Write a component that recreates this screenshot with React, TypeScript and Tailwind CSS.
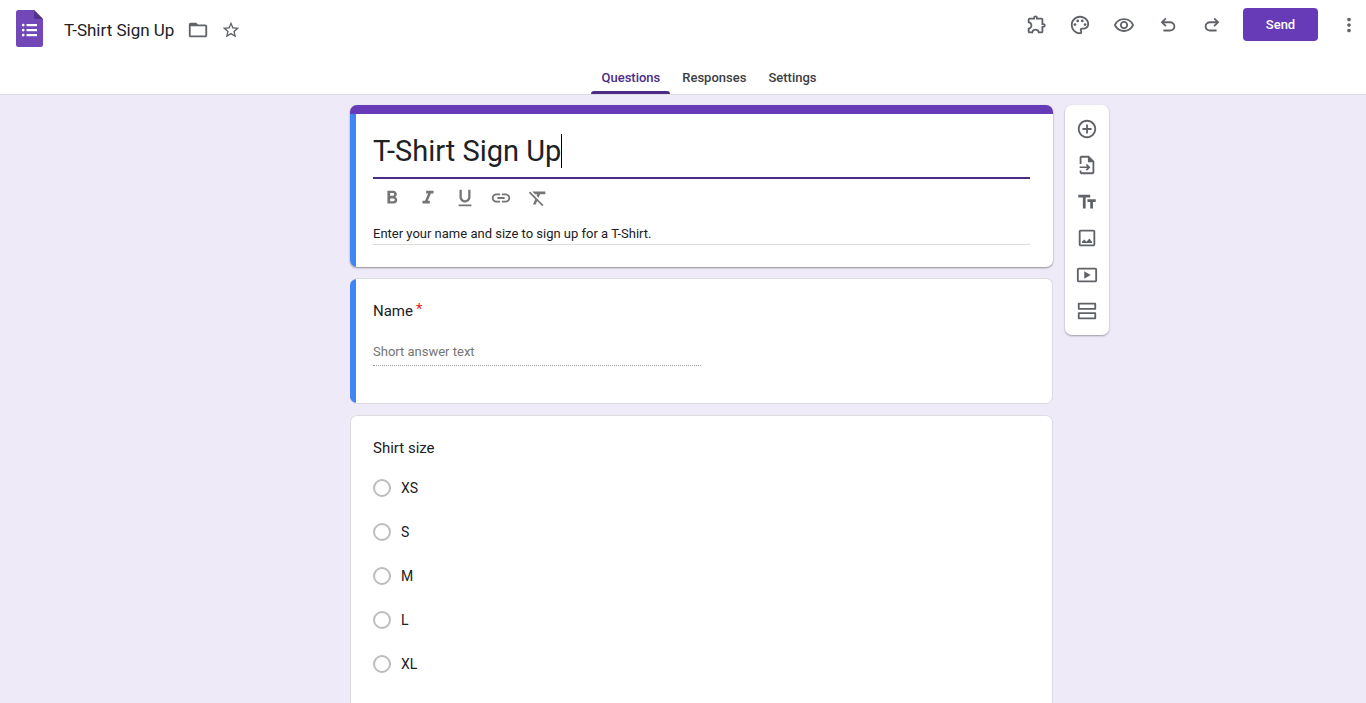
import { useState } from "react";
import type { ReactNode } from "react";
import {
  MdAddCircleOutline,
  MdFolderOpen,
  MdFormatBold,
  MdFormatClear,
  MdFormatItalic,
  MdFormatUnderlined,
  MdLink,
  MdMoreVert,
  MdOutlinePalette,
  MdOutlineRemoveRedEye,
  MdStarBorder,
  MdTextFields,
} from "react-icons/md";

const sizes = ["XS", "S", "M", "L", "XL"];
const tabs = ["Questions", "Responses", "Settings"];

function FormsLogo() {
  return (
    <svg viewBox="0 0 27 37" className="w-[27px] h-[37px]">
      <path d="M2.5 0H18l9 9v25.5a2.5 2.5 0 0 1-2.5 2.5h-22A2.5 2.5 0 0 1 0 34.5v-32A2.5 2.5 0 0 1 2.5 0z" fill="#7248b9" />
      <path d="M18 0l9 9h-7.5A1.5 1.5 0 0 1 18 7.5z" fill="#54318c" />
      <g fill="#fff">
        <rect x="10.5" y="14" width="10.5" height="2.2" />
        <rect x="10.5" y="19" width="10.5" height="2.2" />
        <rect x="10.5" y="24" width="10.5" height="2.2" />
        <circle cx="7.2" cy="15.1" r="1.4" />
        <circle cx="7.2" cy="20.1" r="1.4" />
        <circle cx="7.2" cy="25.1" r="1.4" />
      </g>
    </svg>
  );
}

function ExtensionIcon() {
  return (
    <svg viewBox="0 -960 960 960" fill="currentColor" className="size-[22px]">
      <path d="M352-120H200q-33 0-56.5-23.5T120-200v-152q48 0 84-30.5t36-77.5q0-47-36-77.5T120-568v-152q0-33 23.5-56.5T200-800h160q0-42 29-71t71-29q42 0 71 29t29 71h160q33 0 56.5 23.5T800-720v160q42 0 71 29t29 71q0 42-29 71t-71 29v160q0 33-23.5 56.5T720-120H568q0-50-31.5-85T460-240q-45 0-76.5 35T352-120Zm-152-80h85q24-66 77-93t98-27q45 0 98 27t77 93h85v-240h80q8 0 14-6t6-14q0-8-6-14t-14-6h-80v-240H480v-80q0-8-6-14t-14-6q-8 0-14 6t-6 14v80H200v88q54 20 87 67t33 105q0 57-33 104t-87 68v88Z" />
    </svg>
  );
}

function UndoIcon({ className = "" }: { className?: string }) {
  return (
    <svg viewBox="0 0 24 24" fill="currentColor" className={`size-[22px] ${className}`}>
      <path d="M7 19v-2h7.1q1.575 0 2.738-1T18 13.5 16.838 11 14.1 10H7.8l2.6 2.6L9 14 4 9l5-5 1.4 1.4L7.8 8h6.3q2.425 0 4.163 1.575T20 13.5t-1.737 3.925T14.1 19Z" />
    </svg>
  );
}

function ImportIcon() {
  return (
    <svg viewBox="0 0 24 24" fill="currentColor" className="size-[22px]">
      <path d="M14 2H6c-1.1 0-2 .9-2 2v7h2V4h7v5h5v11H6v-2H4v2c0 1.1.9 2 2 2h12c1.1 0 2-.9 2-2V8z" />
      <path d="M12 18.200l3.700-3.700-3.700-3.700-1.300 1.300 1.500 1.500H4v1.800h8.200l-1.500 1.500z" />
    </svg>
  );
}

function ImageIcon() {
  return (
    <svg viewBox="0 0 24 24" fill="currentColor" className="size-[22px]">
      <path d="M19 3H5c-1.100 0-2 .9-2 2v14c0 1.100.9 2 2 2h14c1.100 0 2-.9 2-2V5c0-1.100-.9-2-2-2zm0 16H5V5h14v14z" />
      <path d="M6.500 17.500v-1.500l2.500-2.500 2.500 2.500 3-3.500 3 3.500v1.500z" />
    </svg>
  );
}

function VideoIcon() {
  return (
    <svg viewBox="0 0 24 24" fill="currentColor" className="size-[22px]">
      <path d="M21 4H3c-1.100 0-2 .9-2 2v12c0 1.100.9 2 2 2h18c1.100 0 2-.9 2-2V6c0-1.100-.9-2-2-2zm0 14H3V6h18v12z" />
      <path d="M9 8v8l7-4z" />
    </svg>
  );
}

function SectionIcon() {
  return (
    <svg viewBox="0 0 24 24" fill="none" stroke="currentColor" strokeWidth="2" strokeLinejoin="round" className="size-[22px]">
      <rect x="3" y="4" width="18" height="5.600" />
      <rect x="3" y="14.400" width="18" height="5.600" />
    </svg>
  );
}

function IconButton({ label, className, children }: { label: string; className: string; children: ReactNode }) {
  return (
    <button type="button" aria-label={label} className={`flex items-center justify-center cursor-pointer ${className}`}>
      {children}
    </button>
  );
}

function Header() {
  const [active, setActive] = useState("Questions");

  return (
    <header className="bg-white border-b border-[#dadce0]">
      <div className="flex items-start justify-between pl-4 pr-[6px] pt-2">
        <div className="flex items-center pt-[2px]">
          <a href="#" aria-label="Forms home">
            <FormsLogo />
          </a>
          <div className="flex items-center ml-[21px] pt-[3px]">
            <h1 className="text-[17px] leading-6">T-Shirt Sign Up</h1>
            <IconButton label="Move to folder" className="ml-[13px] size-[22px] text-[#5f6368]">
              <MdFolderOpen size={22} />
            </IconButton>
            <IconButton label="Star" className="ml-[11px] size-[22px] text-[#5f6368]">
              <MdStarBorder size={20} />
            </IconButton>
          </div>
        </div>

        <div className="flex items-center text-[#5f6368]">
          <IconButton label="Add-ons" className="w-11 h-8"><ExtensionIcon /></IconButton>
          <IconButton label="Customize theme" className="w-11 h-8"><MdOutlinePalette size={22} /></IconButton>
          <IconButton label="Preview" className="w-11 h-8"><MdOutlineRemoveRedEye size={22} /></IconButton>
          <IconButton label="Undo" className="w-11 h-8"><UndoIcon /></IconButton>
          <IconButton label="Redo" className="w-11 h-8"><UndoIcon className="-scale-x-100" /></IconButton>
          <button type="button" className="ml-[9px] w-[75px] h-[33px] rounded-[4px] bg-[#673ab7] text-white text-[13px] font-medium cursor-pointer">
            Send
          </button>
          <IconButton label="More" className="ml-5 w-[22px] h-8"><MdMoreVert size={22} /></IconButton>
        </div>
      </div>

      {/* Tabs */}
      <nav className="flex justify-center gap-[2px] pl-[52px] pt-[14px]">
        {tabs.map((tab) => (
          <button
            key={tab}
            type="button"
            onClick={() => setActive(tab)}
            className={`flex flex-col px-[10px] pt-[7px] text-[13px] leading-5 font-medium cursor-pointer relative ${
              tab === active ? "text-[#4c2b87]" : "text-[#3c4043]"
            }`}
          >
            <span className="pb-[6px]">{tab}</span>
            {tab === active && <span className="absolute inset-x-0 bottom-0 h-[3px] rounded-t-[3px] bg-[#4c2b87]" />}
          </button>
        ))}
      </nav>
    </header>
  );
}

function TitleCard() {
  const [title, setTitle] = useState("T-Shirt Sign Up");
  const [description, setDescription] = useState("Enter your name and size to sign up for a T-Shirt.");

  return (
    <section className="rounded-[7px] overflow-hidden bg-white border-t-[9px] border-[#673ab7] shadow-[0_1px_2px_rgba(0,0,0,0.4)]">
      <div className="border-l-[6px] border-[#4285f4] pl-[17px] pr-[23px] pb-[22px] pt-[18px]">
        <div className="flex items-center h-[47px] pb-[8px] border-b-2 border-[#4c2b87]">
          <input
            aria-label="Form title"
            value={title}
            onChange={(e) => setTitle(e.target.value)}
            className="field-sizing-content text-[29px] leading-9 outline-none"
          />
          <span className="w-px h-[34px] bg-black" />
        </div>
        <div className="flex pt-px text-[#757575]">
          <IconButton label="Bold" className="w-[37px] h-9"><MdFormatBold size={22} /></IconButton>
          <IconButton label="Italic" className="w-[36px] h-9"><MdFormatItalic size={22} /></IconButton>
          <IconButton label="Underline" className="w-[37px] h-9"><MdFormatUnderlined size={22} /></IconButton>
          <IconButton label="Insert link" className="w-[36px] h-9"><MdLink size={22} /></IconButton>
          <IconButton label="Remove formatting" className="w-[37px] h-9"><MdFormatClear size={22} /></IconButton>
        </div>
        <input
          aria-label="Form description"
          value={description}
          onChange={(e) => setDescription(e.target.value)}
          className="block w-full mt-[8px] text-[13px] leading-5 border-b border-[#dadce0] outline-none"
        />
      </div>
    </section>
  );
}

function NameCard() {
  return (
    <section className="rounded-[7px] overflow-hidden bg-white border border-l-0 border-[#dadce0]">
      <div className="border-l-[6px] border-[#4285f4] pl-[17px] pr-[23px] pt-5 pb-[37px]">
        <label htmlFor="name" className="flex gap-[3px] text-[15px] leading-6">
          Name <span className="leading-5 text-[#ea1c1c]">*</span>
        </label>
        <input
          id="name"
          placeholder="Short answer text"
          className="block w-1/2 mt-[19px] pb-[3px] text-[13px] leading-5 border-b border-dotted border-[#9e9e9e] placeholder:text-[#757575] outline-none"
        />
      </div>
    </section>
  );
}

function SizeCard() {
  return (
    <fieldset className="grow rounded-t-[7px] bg-white border border-b-0 border-[#dadce0] px-[22px] pt-5 pb-4">
      <legend className="float-left w-full text-[15px] leading-6">Shirt size</legend>
      <div className="clear-both pt-[6px]">
        {sizes.map((size) => (
          <label key={size} className="flex items-center gap-[10px] h-11 text-[14px]">
            <input
              type="radio"
              name="size"
              value={size}
              className="appearance-none size-[18px] rounded-full border-2 border-[#bdbdbd] checked:border-[5px] checked:border-[#673ab7]"
            />
            {size}
          </label>
        ))}
      </div>
    </fieldset>
  );
}

function SideToolbar() {
  return (
    <aside className="flex flex-col items-center justify-between w-[44px] h-[230px] py-[6px] rounded-[7px] bg-white text-[#5f6368] shadow-[0_1px_2px_rgba(0,0,0,0.35)]">
      <IconButton label="Add question" className="size-9"><MdAddCircleOutline size={22} /></IconButton>
      <IconButton label="Import questions" className="size-9"><ImportIcon /></IconButton>
      <IconButton label="Add title and description" className="size-9"><MdTextFields size={22} /></IconButton>
      <IconButton label="Add image" className="size-9"><ImageIcon /></IconButton>
      <IconButton label="Add video" className="size-9"><VideoIcon /></IconButton>
      <IconButton label="Add section" className="size-9"><SectionIcon /></IconButton>
    </aside>
  );
}

export default function App() {
  return (
    <div className="flex flex-col min-h-screen bg-[#eeeaf8] text-[#202124] font-[Roboto,sans-serif]">
      <Header />
      <main className="grow grid grid-cols-[1fr_minmax(0,703px)_1fr] gap-3 pl-[37px] pt-[10px]">
        <div className="col-start-2 flex flex-col gap-[11px]">
          <TitleCard />
          <NameCard />
          <SizeCard />
        </div>
        <div>
          <SideToolbar />
        </div>
      </main>
    </div>
  );
}
